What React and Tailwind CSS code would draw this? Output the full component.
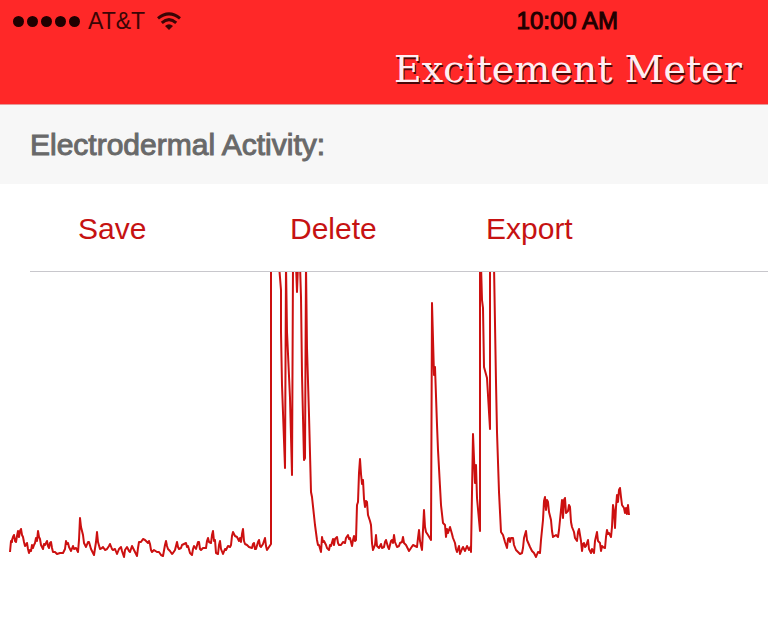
const ACTIONS = ['Save', 'Delete', 'Export'];

// Skin conductance trace, readings above 272 run off the top of the plot
const TRACE = `
  10,552 11,541 12,542 12,540 13,537 14,535 15,541 16,542 17,536 18,531 19,537 20,531 21,529 22,535 23,537 24,542 25,546
  26,545 27,543 28,549 29,553 30,550 31,551 32,545 33,548 34,545 35,543 36,538 37,541 38,531 39,537
  40,539 41,545 43,549 44,544 45,545 47,541 48,546 49,548 50,543 51,542 52,548 53,552 55,552 57,554 60,553 63,553 65,549
  66,541 67,544 68,543 69,547 71,551 73,546 74,549 76,548 78,552 79,540
  80,518 81,527 83,535 84,543 86,547 88,542 89,542 91,549 94,555 96,542 97,532 98,542 100,549 102,548 103,547 105,550
  107,549 109,546 110,544 112,549 113,550 115,549 117,554 119,549 121,547 122,551 124,557
  125,550 127,547 129,551 130,552 132,546 134,550 137,556 138,548 139,542 141,542 143,539 145,540 148,543 149,541 150,544
  151,550 152,552 154,550 157,552 159,552 161,555 163,556 165,545 166,541 167,546 168,549 170,551 172,554 173,553
  175,550 176,546 177,542 178,547 179,549 181,548 182,545 184,544 186,543 187,547 188,546 190,553 192,555 193,549
  194,546 196,549 198,542 199,542 200,549 201,550 203,548 206,548 207,541 208,538 209,542 211,543
  212,535 213,531 214,541 215,540 216,553 218,554 219,545 220,541 221,549 223,554 225,549 226,550 228,546 230,547
  231,545 232,536 233,532 235,536 237,537 239,541 240,538 241,542 242,534 243,529 244,541 245,544 247,545 249,547 252,548
  253,544 254,543 255,549 256,549 258,542 259,540 260,546 261,547 263,544 265,538 266,546 267,550 269,547 271,544 271,265
  279,265 281,290 281,332 282,385 285,468 286,265 287,332 290,398 292,475 293,265 296,265 297,292 298,265
  300,265 301,297 302,375 304,460 305,458 306,265 307,348 309,415 311,492 312,497 315,525 317,540 318,545 319,545 321,552
  322,537 323,542 324,541 326,545 327,548 329,550 330,545 331,546 333,539 334,545 335,539 337,537 338,543 339,545
  341,545 343,542 345,543 346,538 348,535 349,539 350,538 352,546 353,540 354,536 355,541 356,540
  357,505 358,502 359,473 360,459 361,474 362,484 363,480 364,499 365,507 366,501 367,502 368,515 370,521 371,525
  372,543 373,550 375,545 376,535 377,546 379,548 381,544 382,548 384,547 385,542 386,540 388,547 389,549 391,541
  392,540 393,543 394,535 395,542 397,547 399,546 400,543 402,542 403,537 404,543 406,545 408,549 409,551 411,548
  413,545 415,546 417,547 418,538 419,530 420,541 422,550 423,530 424,510 425,527
  426,532 428,535 431,540 432,303 434,375 435,367 437,425 438,450 441,505 443,523 445,525 446,537 447,529 448,533
  450,527 452,534 453,538 455,543 456,549 457,552 459,546 460,554 462,549 463,547 465,551 467,546 469,550 471,546
  471,552 473,434 475,483 476,465 477,498 480,531 480,265
  481,265 482,300 483,308 484,367 487,378 490,429 490,265 494,265 496,382 497,432 499,492 501,532 503,535 505,542 507,548
  508,539 509,538 510,542 511,538 513,538 514,545 516,550 518,552 520,554 522,553 523,548 524,538 526,531 527,540
  530,547 532,551 534,553 536,557 538,552 540,553 541,540 542,530 543,520 544,501 545,497 546,510
  547,500 548,502 549,512 551,520 552,531 553,537 556,535 558,537 559,530 560,520 562,500 563,518 564,500 565,498
  566,513 568,511 569,505 570,507 571,522 572,527 574,532 575,538 577,541 578,532 579,529 581,541
  582,551 583,544 584,543 585,547 586,546 588,540 589,549 591,553 592,549 594,553 595,541 597,532 598,541 600,543
  601,551 602,546 603,547 605,548 606,537 607,530 608,534 609,533 611,537 612,527 613,505
  614,511 615,528 616,507 617,495 618,502 619,490 620,488 621,497 622,505 624,508 625,513 626,508 627,514 628,505 629,515
`;

const StatusBar = () => (
  <div className="flex h-[42px] items-center justify-between pl-[13px] pr-[150px] text-[#3a0505]">
    <div className="flex items-center">
      <div className="flex gap-[3px]">
        {[1, 2, 3, 4, 5].map(dot => (
          <span key={dot} className="h-[11px] w-[11px] rounded-full bg-[#200000]"></span>
        ))}
      </div>
      <span className="ml-2 text-[23px] leading-10">AT&amp;T</span>
      <svg viewBox="0 0 24 18" className="ml-3 h-[18px] w-6" fill="none" stroke="currentColor" strokeWidth="3">
        <path d="M1 6.4Q12 -2.6 23 6.4" />
        <path d="M4.8 10.8Q12 4.4 19.2 10.8" />
        <path d="M8 14Q12 10.4 16 14L12 18Z" fill="currentColor" stroke="none" />
      </svg>
    </div>
    <time className="text-2xl leading-10 text-[#200000] [-webkit-text-stroke:1px]">10:00 AM</time>
  </div>
);

const App = () => {
  return (
    <div className="min-h-screen bg-white font-['Liberation_Sans',sans-serif]">
      <header className="border-b border-[#e59a9a] bg-[#ff2828]">
        <StatusBar />
        <h1 className="h-[62px] pr-[26px] text-right font-['DejaVu_Serif',serif] text-[38px] leading-[54px] text-[#ffeef2] [text-shadow:1px_2px_0_#4a0808]">
          Excitement Meter
        </h1>
      </header>

      <h2 className="bg-[#f7f7f7] px-[30px] pt-px text-[30px] leading-[78px] text-[#696969] [-webkit-text-stroke:1px]">
        Electrodermal Activity:
      </h2>

      {/* Recording actions */}
      <div className="ml-[30px] flex h-[88px] items-center border-b border-[#c8c7cc] pl-12 pt-0.5">
        <div className="grid grid-cols-[212px_196px_auto] justify-items-start text-[30px] text-[#c61212]">
          {ACTIONS.map(action => (
            <button key={action} type="button" className="leading-10">
              {action}
            </button>
          ))}
        </div>
      </div>

      <svg
        viewBox="0 272 640 300"
        className="block h-[300px] w-[640px]"
        fill="none"
        role="img"
        aria-label="Electrodermal activity over time"
      >
        <polyline points={TRACE} stroke="#cc1010" strokeWidth="2" strokeLinejoin="round" />
      </svg>
    </div>
  );
};

export default App;
